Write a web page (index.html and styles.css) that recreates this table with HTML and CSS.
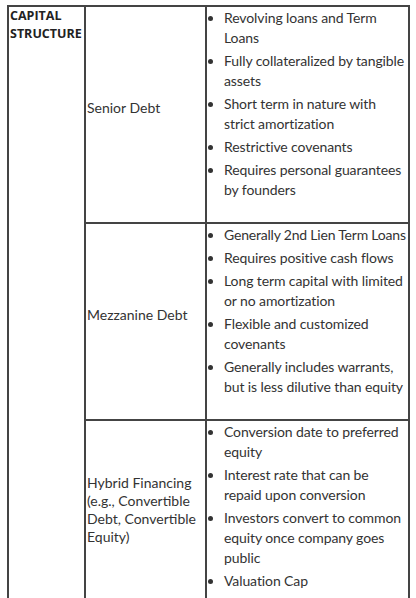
FILE: index.html
```html
<!DOCTYPE html>
<html>
<head>
<meta charset="utf-8">
<link rel="stylesheet" href="styles.css">
</head>
<body>
<table class="cap">
  <colgroup>
    <col class="c1">
    <col class="c2">
    <col class="c3">
  </colgroup>
  <tr>
    <td class="head" rowspan="3"><strong>CAPITAL STRUCTURE</strong></td>
    <td class="type"><p>Senior Debt</p></td>
    <td class="points">
      <ul>
        <li>Revolving loans and Term Loans</li>
        <li>Fully collateralized by tangible assets</li>
        <li>Short term in nature with strict amortization</li>
        <li>Restrictive covenants</li>
        <li>Requires personal guarantees by founders</li>
      </ul>
    </td>
  </tr>
  <tr>
    <td class="type"><p>Mezzanine Debt</p></td>
    <td class="points">
      <ul>
        <li class="oneline">Generally 2nd Lien Term Loans</li>
        <li>Requires positive cash flows</li>
        <li>Long term capital with limited or no amortization</li>
        <li>Flexible and customized covenants</li>
        <li>Generally includes warrants, but is less dilutive than equity</li>
      </ul>
    </td>
  </tr>
  <tr>
    <td class="type"><p>Hybrid Financing (e.g., Convertible Debt, Convertible Equity)</p></td>
    <td class="points">
      <ul>
        <li>Conversion date to preferred equity</li>
        <li>Interest rate that can be repaid upon conversion</li>
        <li>Investors convert to common equity once company goes public</li>
        <li>Valuation Cap</li>
      </ul>
    </td>
  </tr>
</table>
</body>
</html>
```
FILE: styles.css
```css
html, body {
  margin: 0;
  padding: 0;
  background: #fff;
}
body {
  font-family: "Lato", "Open Sans", sans-serif;
  font-size: 14px;
  color: #333;
}
.cap {
  margin: 5px 0 0 7px;
  width: 401px;
  border-collapse: collapse;
  table-layout: fixed;
  border: 2px solid #444;
}
.c1 { width: 77px; }
.c2 { width: 121px; }
.c3 { width: 203px; }
.cap td {
  border: 2px solid #444;
  padding: 0 0 0 1px;
}
.head {
  vertical-align: top;
  font-family: "Open Sans", sans-serif;
  font-size: 12.5px;
  line-height: 18px;
  color: #222;
}
.head strong { font-weight: 700; }
.type {
  vertical-align: middle;
  line-height: 18px;
}
.type p {
  margin: 0 0 14px 0;
}
.cap td.points {
  vertical-align: top;
  padding-top: 1px;
}
.points ul {
  margin: 0 0 22px 0;
  padding-left: 16px;
  line-height: 20px;
  letter-spacing: -0.1px;
}
.points li {
  margin-bottom: 3px;
}
.points li.oneline {
  white-space: nowrap;
  letter-spacing: -0.2px;
}
```
